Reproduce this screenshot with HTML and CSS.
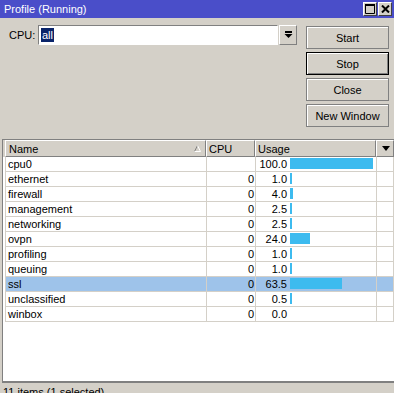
FILE: index.html
```html
<!DOCTYPE html>
<html lang="en">
<head>
    <meta charset="UTF-8">
    <title>Profile (Running)</title>
    <link rel="stylesheet" href="styles.css">
</head>
<body>
    <div class="window">
        <div class="titlebar">
            <span class="title">Profile (Running)</span>
            <div class="title-buttons">
                <div class="tbtn">
                    <svg width="10" height="10" viewBox="0 0 10 10"><path d="M0.5 0.5h9v9h-9z M0 1.5h10" fill="none" stroke="#000" stroke-width="1"/><rect x="0" y="0" width="10" height="2" fill="#000"/></svg>
                </div>
                <div class="tbtn">
                    <svg width="9" height="8" viewBox="0 0 9 8"><path d="M1 0.5L8 7.5M8 0.5L1 7.5" stroke="#000" stroke-width="2"/></svg>
                </div>
            </div>
        </div>

        <div class="top">
            <div class="cpu-field">
                <label class="cpu-label">CPU:</label>
                <div class="combo"><span class="sel">all</span></div>
                <div class="combo-btn">
                    <svg width="9" height="8" viewBox="0 0 9 8"><rect x="1" y="0" width="7" height="2" fill="#000"/><path d="M0.5 3h8l-4 4z" fill="#000"/></svg>
                </div>
            </div>
            <div class="actions">
                <div class="btn">Start</div>
                <div class="btn default">Stop</div>
                <div class="btn">Close</div>
                <div class="btn">New Window</div>
            </div>
        </div>

        <div class="list">
            <div class="head">
                <div class="hcell name">Name
                    <svg class="sort" width="7" height="7" viewBox="0 0 7 7"><path d="M0.5 6.5L3.5 0.5" stroke="#808080" fill="none"/><path d="M3.5 0.5L6.5 6.5H0.5" stroke="#fff" fill="none"/></svg>
                </div>
                <div class="hcell">CPU</div>
                <div class="hcell">Usage</div>
                <div class="hcell more">
                    <svg width="8" height="5" viewBox="0 0 8 5"><path d="M0 0h8l-4 5z" fill="#000"/></svg>
                </div>
            </div>
            <div class="rows">
                <div class="row"><div class="c-name">cpu0</div><div class="c-cpu"></div><div class="c-use"><span class="num">100.0</span><span class="bar" style="width: 83px"></span></div><div class="c-end"></div></div>
                <div class="row"><div class="c-name">ethernet</div><div class="c-cpu">0</div><div class="c-use"><span class="num">1.0</span><span class="bar" style="width: 2px"></span></div><div class="c-end"></div></div>
                <div class="row"><div class="c-name">firewall</div><div class="c-cpu">0</div><div class="c-use"><span class="num">4.0</span><span class="bar" style="width: 3px"></span></div><div class="c-end"></div></div>
                <div class="row"><div class="c-name">management</div><div class="c-cpu">0</div><div class="c-use"><span class="num">2.5</span><span class="bar" style="width: 2px"></span></div><div class="c-end"></div></div>
                <div class="row"><div class="c-name">networking</div><div class="c-cpu">0</div><div class="c-use"><span class="num">2.5</span><span class="bar" style="width: 2px"></span></div><div class="c-end"></div></div>
                <div class="row"><div class="c-name">ovpn</div><div class="c-cpu">0</div><div class="c-use"><span class="num">24.0</span><span class="bar" style="width: 20px"></span></div><div class="c-end"></div></div>
                <div class="row"><div class="c-name">profiling</div><div class="c-cpu">0</div><div class="c-use"><span class="num">1.0</span><span class="bar" style="width: 2px"></span></div><div class="c-end"></div></div>
                <div class="row"><div class="c-name">queuing</div><div class="c-cpu">0</div><div class="c-use"><span class="num">1.0</span><span class="bar" style="width: 2px"></span></div><div class="c-end"></div></div>
                <div class="row selected"><div class="c-name">ssl</div><div class="c-cpu">0</div><div class="c-use"><span class="num">63.5</span><span class="bar" style="width: 52px"></span></div><div class="c-end"></div></div>
                <div class="row"><div class="c-name">unclassified</div><div class="c-cpu">0</div><div class="c-use"><span class="num">0.5</span><span class="bar" style="width: 2px"></span></div><div class="c-end"></div></div>
                <div class="row"><div class="c-name">winbox</div><div class="c-cpu">0</div><div class="c-use"><span class="num">0.0</span></div><div class="c-end"></div></div>
            </div>
        </div>

        <div class="status">11 items (1 selected)</div>
    </div>
</body>
</html>
```

FILE: styles.css
```css
body {
    margin: 0;
    padding: 0;
    font-family: 'Liberation Sans', Arial, sans-serif;
    font-size: 11px;
    color: #000;
    background: #d4d0c8;
    overflow: hidden;
}
.window {
    width: 394px;
    height: 393px;
    display: flex;
    flex-direction: column;
    background: #d4d0c8;
}
.titlebar {
    height: 18px;
    flex: none;
    background: #4a4ec9;
    display: flex;
    align-items: center;
    justify-content: space-between;
    padding: 0 2px 0 4px;
}
.title {
    color: #fff;
    font-size: 11px;
    line-height: 18px;
}
.title-buttons {
    display: flex;
    gap: 1px;
    margin-top: -1px;
}
.tbtn {
    width: 14px;
    height: 14px;
    box-sizing: border-box;
    background: #d4d0c8;
    border: 1px solid;
    border-color: #fff #404040 #404040 #fff;
    display: flex;
    align-items: center;
    justify-content: center;
}
.top {
    height: 121px;
    flex: none;
    display: flex;
    justify-content: space-between;
    padding: 7px 5px 0 9px;
    box-sizing: border-box;
}
.cpu-field {
    display: flex;
    align-items: flex-start;
    height: 20px;
}
.cpu-label {
    width: 29px;
    line-height: 20px;
}
.combo {
    width: 240px;
    height: 20px;
    box-sizing: border-box;
    background: #fff;
    border: 1px solid;
    border-color: #808080 #fff #fff #808080;
    padding: 2px 0 0 2px;
}
.sel {
    background: #0a246a;
    color: #fff;
    display: inline-block;
    line-height: 14px;
    padding: 0 1px;
}
.combo-btn {
    width: 18px;
    height: 20px;
    box-sizing: border-box;
    border: 1px solid;
    border-color: #fff #808080 #808080 #fff;
    display: flex;
    align-items: center;
    justify-content: center;
    margin-left: 1px;
}
.actions {
    display: flex;
    flex-direction: column;
    gap: 3px;
    margin-top: 1px;
}
.btn {
    width: 83px;
    height: 23px;
    box-sizing: border-box;
    border: 1px solid #808080;
    box-shadow: inset 1px 1px #fff;
    display: flex;
    align-items: center;
    justify-content: center;
    font-size: 11px;
}
.btn.default {
    border-color: #000;
    box-shadow: inset 1px 1px #fff, inset -1px -1px #808080;
}
.list {
    flex: none;
    height: 244px;
    box-sizing: border-box;
    margin-left: 2px;
    border-top: 1px solid #808080;
    border-left: 1px solid #808080;
    border-bottom: 2px solid #808080;
    background: #fff;
    display: flex;
    flex-direction: column;
}
.head {
    display: grid;
    grid-template-columns: 201px 49px 121px 1fr;
    height: 17px;
    border-left: 2px solid #d4d0c8;
    background: #d4d0c8;
}
.hcell {
    box-sizing: border-box;
    border: 1px solid;
    border-color: #fff #808080 #808080 #fff;
    padding: 0 2px;
    line-height: 14px;
    display: flex;
    align-items: center;
}
.hcell.name {
    padding-left: 3px;
}
.sort {
    margin-left: auto;
    margin-right: 2px;
}
.hcell.more {
    justify-content: center;
    padding-left: 4px;
}
.row {
    display: grid;
    grid-template-columns: 201px 49px 121px 1fr;
    height: 15px;
    margin-left: 2px;
    border-left: 1px solid #d4d0c8;
}
.row > div {
    box-sizing: border-box;
    border-right: 1px solid #d4d0c8;
    border-bottom: 1px solid #d4d0c8;
    line-height: 14px;
    white-space: nowrap;
}
.row.selected {
    background: #9ec3ea;
}
.c-name {
    padding-left: 2px;
}
.c-cpu {
    text-align: right;
    padding-right: 1px;
}
.c-use {
    display: flex;
    align-items: flex-start;
}
.num {
    width: 31px;
    text-align: right;
    flex: none;
}
.bar {
    display: block;
    height: 11px;
    margin-top: 1px;
    margin-left: 3px;
    background: #3dbbef;
}
.status {
    flex: none;
    padding: 3px 0 0 3px;
    line-height: 13px;
}
```
